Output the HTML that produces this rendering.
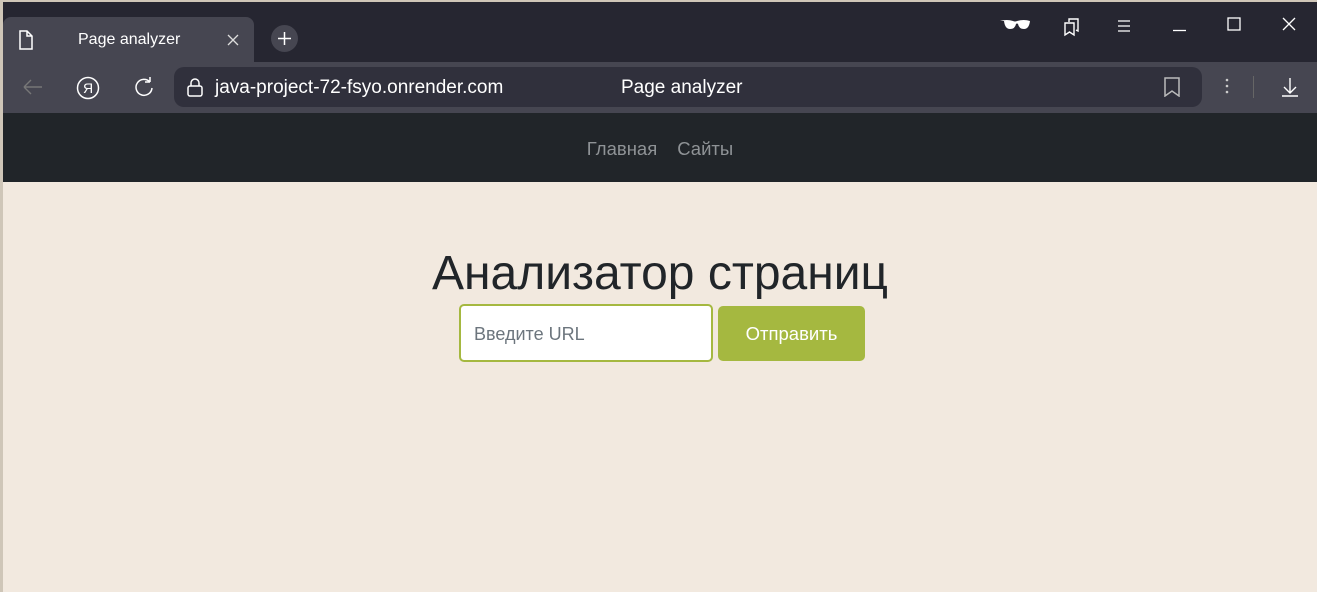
<!DOCTYPE html>
<html><head><meta charset="utf-8"><style>
*{margin:0;padding:0;box-sizing:border-box}
body{width:1317px;height:592px;overflow:hidden;background:#cfc6b8;font-family:"Liberation Sans","DejaVu Sans",sans-serif;position:relative}
.win{position:absolute;left:3px;top:2px;right:0;bottom:0;background:#f2e9df}
.title{position:absolute;left:0;top:0;right:0;height:61px;background:#262631}
.tab{position:absolute;left:0;top:15px;width:251px;height:47px;background:#464651;border-radius:8px 8px 0 0;color:#fff;font-size:16px}
.tb{position:absolute;left:0;top:60px;right:0;height:51px;background:#464651}
.addr{position:absolute;left:171px;top:5px;width:1028px;height:40px;background:#30303c;border-radius:10px;color:#fff;font-size:19px}
.nav{position:absolute;left:0;top:111px;right:0;height:69px;background:#212529;color:#8f9396;font-size:18.5px;text-align:center;line-height:71px}
svg{position:absolute}
</style></head><body><div class="win">
<div class="title">
<div class="tab">
<svg style="left:15px;top:13px" width="16" height="20"><path d="M2 1h7l5 5v13H2z M9 1v5h5" fill="none" stroke="#fff" stroke-width="1.5"/></svg>
<span style="position:absolute;left:75px;top:14px">Page analyzer</span>
<svg style="left:224px;top:17px" width="12" height="12"><path d="M1 1L11 11M11 1L1 11" stroke="#ddd" stroke-width="1.3"/></svg>
</div>
<div style="position:absolute;left:268px;top:23px;width:27px;height:27px;border-radius:50%;background:#464651"></div>
<svg style="left:274px;top:29px" width="15" height="15"><path d="M7.5 1v13M1 7.5h13" stroke="#fff" stroke-width="1.5"/></svg>
<svg style="left:996px;top:16px" width="32" height="14"><path d="M1 3q7-2 13 0q2 1 4 0q7-2 13 0q-1 8-6 8q-5 0-6-5q-1-1-2 0q-1 5-6 5q-5 0-6-8z" fill="#fff"/></svg>
<svg style="left:1058px;top:15px" width="20" height="20"><path d="M4 18V6h9v12l-4.5-3z M8 5V2h9v12l-2-1" fill="none" stroke="#fff" stroke-width="1.4"/></svg>
<svg style="left:1114px;top:18px" width="14" height="12"><path d="M1 1h12M1 6h12M1 11h12" stroke="#fff" stroke-width="1.3"/></svg>
<svg style="left:1170px;top:27px" width="14" height="3"><path d="M0 1.5h13" stroke="#fff" stroke-width="1.3"/></svg>
<svg style="left:1224px;top:15px" width="14" height="14"><rect x="1" y="1" width="12" height="12" fill="none" stroke="#fff" stroke-width="1.3"/></svg>
<svg style="left:1279px;top:15px" width="14" height="14"><path d="M1 1L13 13M13 1L1 13" stroke="#fff" stroke-width="1.3"/></svg>
</div>
<div class="tb">
<svg style="left:20px;top:17px" width="20" height="16"><path d="M1 8h18M1 8l7-7M1 8l7 7" fill="none" stroke="#777" stroke-width="1.4"/></svg>
<svg style="left:73px;top:14px" width="24" height="24"><circle cx="12" cy="12" r="10.5" fill="none" stroke="#fff" stroke-width="1.5"/><text x="12" y="17" font-size="14" fill="#fff" text-anchor="middle" font-family="Liberation Sans">Я</text></svg>
<svg style="left:130px;top:14px" width="22" height="22"><path d="M17 6A8 8 0 1 0 19 12M17 6V1M17 6h-5" fill="none" stroke="#fff" stroke-width="1.5"/></svg>
<div class="addr">
<svg style="left:12px;top:10px" width="18" height="20"><rect x="2" y="9" width="14" height="10" rx="2" fill="none" stroke="#fff" stroke-width="1.5"/><path d="M5 9V6a4 4 0 0 1 8 0v3" fill="none" stroke="#fff" stroke-width="1.5"/></svg>
<span style="position:absolute;left:41px;top:10px">java-project-72-fsyo.onrender.com</span>
<span style="position:absolute;left:447px;top:10px">Page analyzer</span>
<svg style="left:989px;top:10px" width="18" height="20"><path d="M2 1h14v18l-7-5-7 5z" fill="none" stroke="#bbb" stroke-width="1.5"/></svg>
</div>
<svg style="left:1222px;top:16px" width="4" height="16"><circle cx="2" cy="2" r="1.3" fill="#ccc"/><circle cx="2" cy="8" r="1.3" fill="#ccc"/><circle cx="2" cy="14" r="1.3" fill="#ccc"/></svg>
<div style="position:absolute;left:1250px;top:14px;width:1px;height:22px;background:#666"></div>
<svg style="left:1278px;top:15px" width="18" height="20"><path d="M9 1v15M3 10l6 6 6-6M1 19h16" fill="none" stroke="#fff" stroke-width="1.4"/></svg>
</div>
<div class="nav"><span style="margin-right:20px">Главная</span><span>Сайты</span></div>
<div style="position:absolute;left:0;right:0;top:248px;text-align:center;font-size:48px;letter-spacing:0;color:#212529;line-height:1">Анализатор страниц</div>
<div style="position:absolute;left:456px;top:302px;width:254px;height:58px;background:#fff;border:2px solid #a5b840;border-radius:5px;color:#6c757d;font-size:18px;padding:18px 0 0 13px">Введите URL</div>
<div style="position:absolute;left:715px;top:304px;width:147px;height:55px;background:#a5b840;border-radius:5px;color:#fff;font-size:18.5px;text-align:center;line-height:55px">Отправить</div>
</div></body></html>
